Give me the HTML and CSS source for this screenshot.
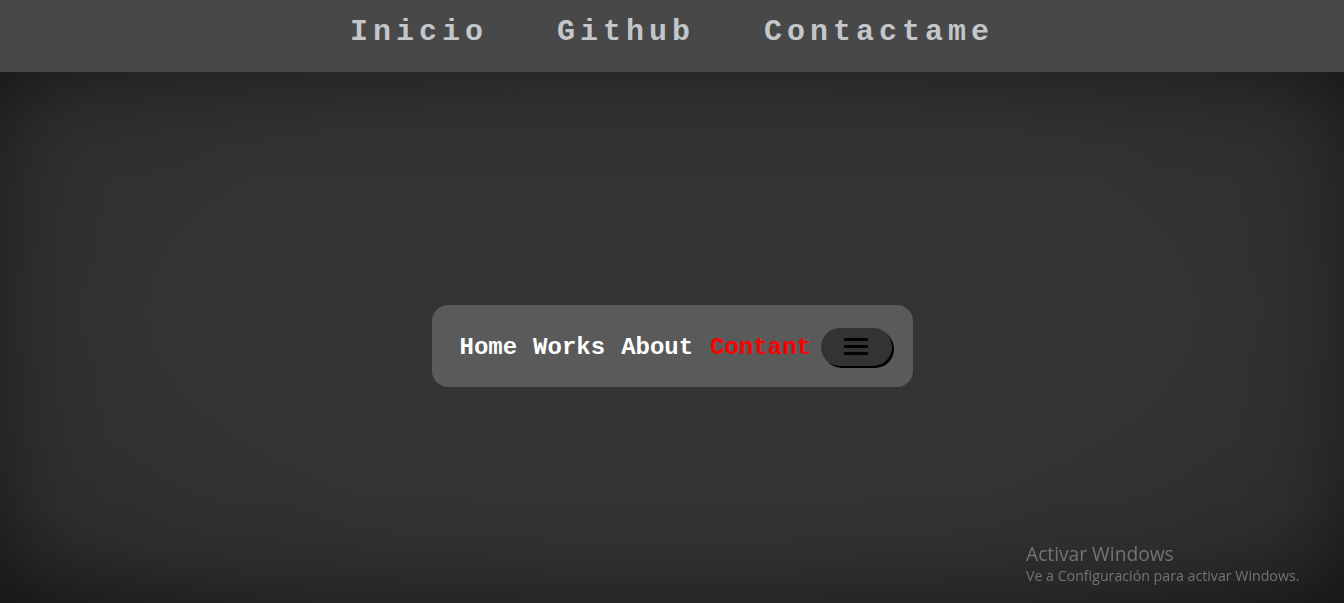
FILE: index.html
```html
<!DOCTYPE html>
<html lang="es">
<head>
<meta charset="utf-8">
<title>Menu</title>
<link rel="stylesheet" href="styles.css">
</head>
<body>
<header class="topbar">
  <nav class="topnav">
    <a class="toplink" href="#">Inicio</a>
    <a class="toplink" href="#">Github</a>
    <a class="toplink" href="#">Contactame</a>
  </nav>
</header>
<main class="stage">
  <div class="card">
    <a class="link" href="#">Home</a>
    <a class="link" href="#">Works</a>
    <a class="link" href="#">About</a>
    <a class="link link-active" href="#">Contant</a>
    <button class="toggle" type="button" aria-label="menu">
      <span class="bars"><span class="bar"></span><span class="bar"></span><span class="bar"></span></span>
    </button>
  </div>
</main>
<div class="watermark">
  <div class="wm-title">Activar Windows</div>
  <div class="wm-sub">Ve a Configuración para activar Windows.</div>
</div>
</body>
</html>
```
FILE: styles.css
```css
* { box-sizing: border-box; }
html, body { margin: 0; padding: 0; }
body {
  background: #333333;
  height: 603px;
  overflow: hidden;
  font-family: "Liberation Mono", "Courier New", monospace;
}
.topbar {
  height: 72px;
  background: #484848;
  padding-top: 17px;
}
.topnav {
  display: flex;
  justify-content: center;
  gap: 69px;
}
.toplink {
  font-size: 30px;
  line-height: 30px;
  font-weight: bold;
  letter-spacing: 5px;
  color: #c3c6ca;
  text-decoration: none;
}
.stage {
  height: 531px;
  display: flex;
  justify-content: center;
  align-items: flex-start;
  padding-top: 233px;
  background: radial-gradient(ellipse at 50% 45%, #343434 0%, #333333 55%, #2e2e2e 80%, #222222 100%);
  box-shadow: inset 0 0 90px rgba(0,0,0,0.4);
}
.card {
  width: 481px;
  height: 82px;
  background: #5a5a5a;
  border-radius: 16px;
  display: flex;
  align-items: center;
  padding-left: 28px;
  gap: 16px;
}
.link {
  font-size: 24px;
  line-height: 28px;
  font-weight: bold;
  color: #ffffff;
  text-decoration: none;
  padding-top: 4px;
}
.link-active { color: #ff0000; margin-left: 1px; }
.toggle {
  margin-left: -6px;
  width: 71px;
  height: 38px;
  border: none;
  border-radius: 19px;
  background: #333333;
  box-shadow: 2px 2px 0 #000000;
  display: flex;
  align-items: center;
  justify-content: center;
  padding: 0;
  margin-top: 1px;
}
.bars {
  display: flex;
  flex-direction: column;
  gap: 4px;
}
.bar {
  display: block;
  width: 24px;
  height: 3px;
  background: #000;
  border-radius: 1px;
}
.watermark {
  position: fixed;
  left: 1026px;
  top: 541px;
  font-family: "Open Sans", "Noto Sans", sans-serif;
  color: #747474;
}
.wm-title { font-size: 19.2px; line-height: 25px; }
.wm-sub { font-size: 14.2px; line-height: 20px; }
```
